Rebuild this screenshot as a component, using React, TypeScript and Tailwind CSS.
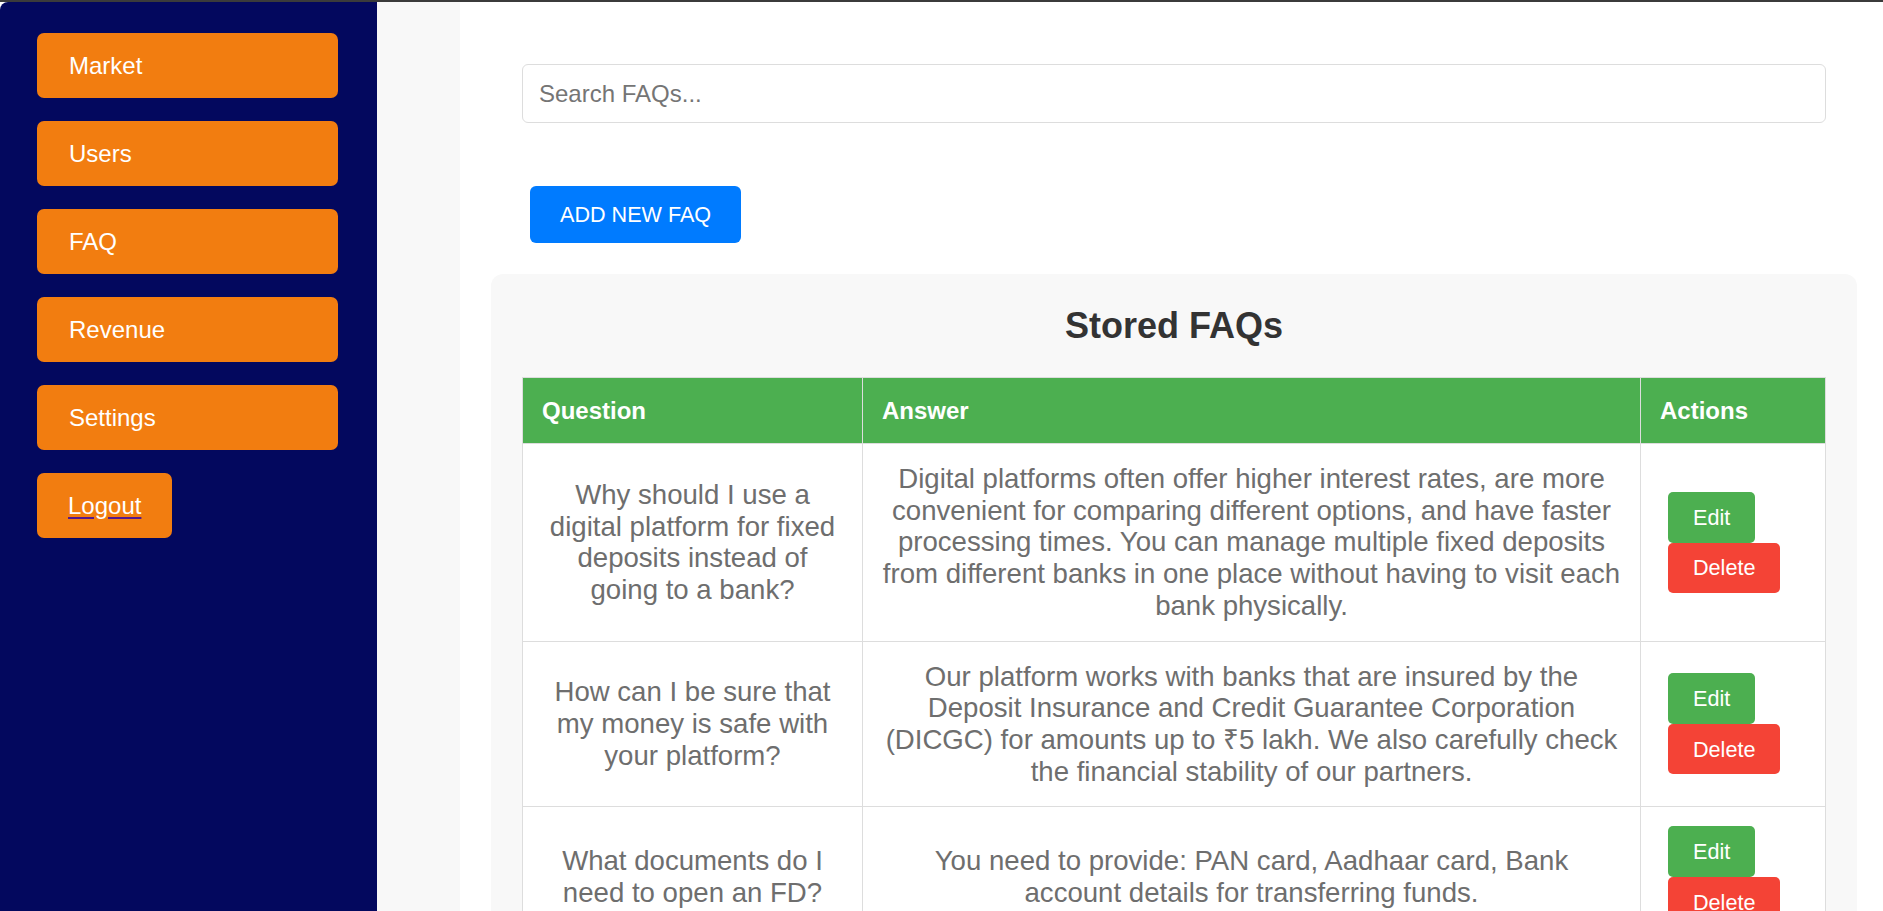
import { useState } from 'react';

interface Faq {
  id: number;
  question: string;
  answer: string;
}

const faqs: Faq[] = [
  {
    id: 1,
    question: 'Why should I use a digital platform for fixed deposits instead of going to a bank?',
    answer:
      'Digital platforms often offer higher interest rates, are more convenient for comparing different options, and have faster processing times. You can manage multiple fixed deposits from different banks in one place without having to visit each bank physically.',
  },
  {
    id: 2,
    question: 'How can I be sure that my money is safe with your platform?',
    answer:
      'Our platform works with banks that are insured by the Deposit Insurance and Credit Guarantee Corporation (DICGC) for amounts up to ₹5 lakh. We also carefully check the financial stability of our partners.',
  },
  {
    id: 3,
    question: 'What documents do I need to open an FD?',
    // nbsp keeps "account details" together so the line wraps like the original
    answer: 'You need to provide: PAN card, Aadhaar card, Bank account\u00a0details for transferring funds.',
  },
];

const navItems = ['Market', 'Users', 'FAQ', 'Revenue', 'Settings'];

export default function App() {
  const [search, setSearch] = useState('');

  const filtered = faqs.filter((f) => f.question.toLowerCase().includes(search.toLowerCase()));

  return (
    <div className="min-h-screen flex flex-col bg-white font-['Liberation_Sans',Arial,sans-serif]">
      <div className="h-[2px] bg-[#3b3b3b]" />
      <div className="flex flex-1">
        {/* sidebar */}
        <aside className="w-[377px] shrink-0 bg-[#03085e] rounded-tl-[8px] pt-[31px] px-[37px] flex flex-col items-start gap-[23px]">
          {navItems.map((item) => (
            <button
              key={item}
              className="w-[301px] h-[65px] flex items-center pl-[32px] bg-[#f27d10] rounded-[7px] text-white text-[24px] leading-[28px]"
            >
              {item}
            </button>
          ))}
          <a
            href="#"
            className="h-[65px] flex items-center px-[31px] bg-[#f27d10] rounded-[7px] text-white text-[24px] leading-[28px] underline decoration-[#551a8b] underline-offset-[3px]"
          >
            Logout
          </a>
        </aside>

        {/* main */}
        <main className="flex-1 bg-[#f8f8f8] pl-[83px] flex">
          <div className="flex-1 bg-white pt-[31px] pl-[31px] pr-[26px] pb-[31px]">
            <div className="px-[31px] pt-[31px]">
              <input
                type="text"
                value={search}
                onChange={(e) => setSearch(e.target.value)}
                placeholder="Search FAQs..."
                className="w-full h-[59px] px-[16px] border border-[#dddddd] rounded-[6px] text-[24px] text-[#333] placeholder:text-[#757575] focus:outline-none"
              />
            </div>

            <div className="mt-[63px] ml-[39px]">
              <button className="h-[57px] px-[30px] bg-[#007bff] rounded-[6px] text-white text-[21.6px] leading-[25px]">
                ADD NEW FAQ
              </button>
            </div>

            <div className="mt-[31px] bg-[#f8f8f8] rounded-[12px] p-[31px]">
              <h2 className="text-center text-[36px] leading-[41px] font-bold text-[#333333] mb-[31px]">
                Stored FAQs
              </h2>
              <table className="w-full table-fixed border-collapse bg-white">
                <thead>
                  <tr>
                    <th className="w-[340px] bg-[#4caf50] text-white text-left font-bold text-[24px] leading-[27px] p-[19px] border border-[#dddddd]">
                      Question
                    </th>
                    <th className="bg-[#4caf50] text-white text-left font-bold text-[24px] leading-[27px] p-[19px] border border-[#dddddd]">
                      Answer
                    </th>
                    <th className="w-[185px] bg-[#4caf50] text-white text-left font-bold text-[24px] leading-[27px] p-[19px] border border-[#dddddd]">
                      Actions
                    </th>
                  </tr>
                </thead>
                <tbody>
                  {filtered.map((faq) => (
                    <tr key={faq.id}>
                      <td className="align-middle text-center text-[27.6px] leading-[31.7px] text-[#6e6e6e] py-[19px] px-[20px] border border-[#dddddd]">
                        {faq.question}
                      </td>
                      <td className="align-middle text-center text-[27.6px] leading-[31.7px] text-[#6e6e6e] py-[19px] px-[19.5px] border border-[#dddddd]">
                        {faq.answer}
                      </td>
                      <td className="align-middle py-[19px] pl-[27px] pr-[10px] border border-[#dddddd]">
                        <div className="flex flex-col items-start">
                          <button className="h-[51px] px-[25px] bg-[#4caf50] rounded-[5px] text-white text-[21.6px] leading-[25px]">
                            Edit
                          </button>
                          <button className="h-[50px] px-[25px] bg-[#f44336] rounded-[5px] text-white text-[21.6px] leading-[25px]">
                            Delete
                          </button>
                        </div>
                      </td>
                    </tr>
                  ))}
                </tbody>
              </table>
            </div>
          </div>
        </main>
      </div>
    </div>
  );
}
